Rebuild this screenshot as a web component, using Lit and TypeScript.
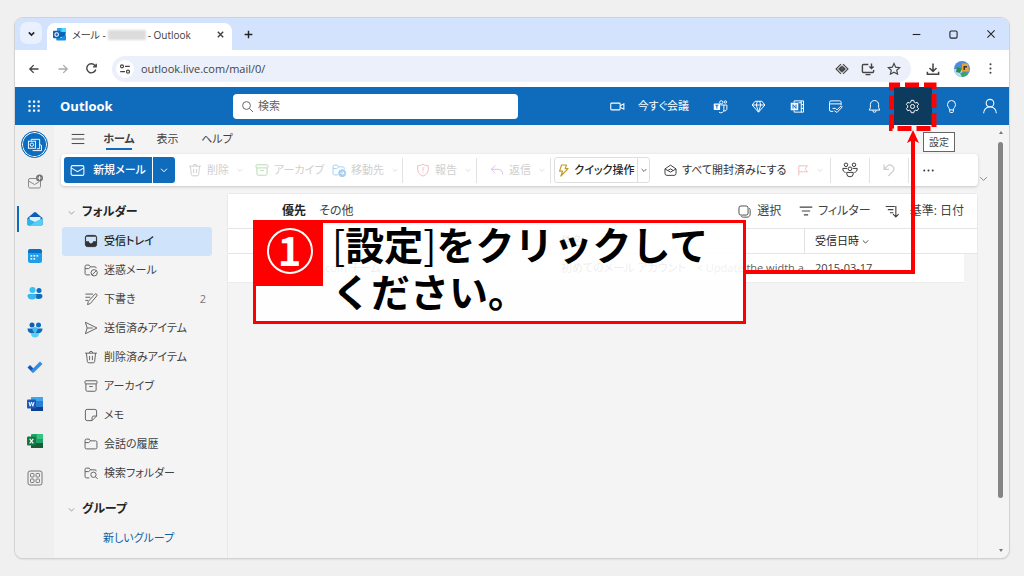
import { LitElement, html, css, svg, TemplateResult } from "lit";
import { customElement } from "lit/decorators.js";
import { classMap } from "lit/directives/class-map.js";

const glyphs: Record<string, TemplateResult> = {
  chevron: svg`<path d="M4 7.5l6 6 6-6"/>`,
  close: svg`<path d="M4 4l12 12M16 4L4 16"/>`,
  plus: svg`<path d="M10 3v14M3 10h14"/>`,
  minus: svg`<path d="M3 10h14"/>`,
  square: svg`<rect x="3.5" y="3.5" width="13" height="13" rx="2.5"/>`,
  back: svg`<path d="M17.5 10H3M9.5 3.5L3 10l6.500 6.500"/>`,
  forward: svg`<path d="M2.500 10H17M10.500 3.500L17 10l-6.500 6.500"/>`,
  reload: svg`<path d="M16.500 11.500A7 7 0 1 1 15.200 5.300L17 7.200M17.200 2.500v5h-5"/>`,
  tune: svg`<circle cx="5" cy="5.500" r="2.500"/><path d="M10 5.500h8M2 14.500h8"/><circle cx="15" cy="14.500" r="2.500"/>`,
  eye: svg`<path d="M8.500 3L1.500 10l7 7M11.500 3l7 7-7 7"/><path d="M9 6.500L5.500 10 9 13.500zM11 6.500l3.500 3.500-3.500 3.500z" fill="currentColor"/>`,
  install: svg`<path d="M10.500 3.500H3.500a1.500 1.500 0 0 0-1.500 1.500v8.500A1.500 1.500 0 0 0 3.500 15h13a1.500 1.500 0 0 0 1.500-1.500v-2M6.500 18h7M15 2v7M12 6.300l3 3 3-3"/>`,
  star: svg`<path d="M10 2.200l2.400 5.200 5.700.6-4.200 3.800 1.200 5.600L10 14.500l-5.100 2.900 1.200-5.600L1.900 8l5.700-.6z"/>`,
  download: svg`<path d="M10 2v11M5 8.500l5 5 5-5M2 14v3.500h16V14"/>`,
  dots: svg`<g fill="currentColor" stroke="none"><circle cx="10" cy="3.500" r="1.600"/><circle cx="10" cy="10" r="1.600"/><circle cx="10" cy="16.500" r="1.600"/></g>`,
  more: svg`<g fill="currentColor" stroke="none"><circle cx="3.500" cy="10" r="1.500"/><circle cx="10" cy="10" r="1.500"/><circle cx="16.500" cy="10" r="1.500"/></g>`,
  waffle: svg`<g fill="currentColor" stroke="none">${[2, 8.5, 15].map((y) => [2, 8.5, 15].map((x) => svg`<rect x=${x} y=${y} width="3.200" height="3.200" rx=".6"/>`))}</g>`,
  search: svg`<circle cx="8.500" cy="8.500" r="6"/><path d="M13 13l5.500 5.500"/>`,
  video: svg`<rect x="1" y="5.500" width="12.500" height="9" rx="1.200"/><path d="M13.500 9l5-2.500v7l-5-2.500"/>`,
  teams: svg`<circle cx="11" cy="4.500" r="2.200"/><circle cx="16.500" cy="4" r="1.600"/><path d="M10 8h4.500v6a4 4 0 0 1-6.500 3.500M14.500 8h4v5a3 3 0 0 1-4 2.800"/><rect x="1" y="6" width="8.500" height="8.500" rx="1" fill="currentColor" stroke="none"/><path d="M3.200 8.300h4M5.200 8.300v4.500" stroke="#0f6cbd"/>`,
  gem: svg`<path d="M5.500 3h9L18.500 8 10 17.500 1.500 8zM1.500 8h17M7 8l3 9.500L13 8M7 8l1.500-5M13 8l-1.500-5"/>`,
  onenote: svg`<path d="M5.500 5V2.500h12.500v15H5.500V15M15 2.500v15M15 7.500h3M15 12.500h3M11.500 5H15"/><rect x="1" y="5" width="10" height="10" fill="currentColor" stroke="none"/><path d="M4 12.800V7.500l4 5V7.300" stroke="#0f6cbd"/>`,
  note: svg`<path d="M7 16.500H4a2 2 0 0 1-2-2v-10a2 2 0 0 1 2-2h11.500a2 2 0 0 1 2 2V8M2 6.500h15.500M6 12.500h4l2 2 5.500-5.500 1.500 1.500-7 7.500-3.500-2.500"/>`,
  bell: svg`<path d="M10 2a5.500 5.500 0 0 0-5.500 5.500v4L3 14.800h14l-1.500-3.300v-4A5.500 5.500 0 0 0 10 2zM8 15v.8a2 2 0 0 0 4 0V15"/>`,
  gear: svg`<circle cx="10" cy="10" r="2.700"/><path d="M8.300 1.800h3.400l.6 2.400 1.700 1 2.400-.7 1.700 2.900-1.800 1.700v1.900l1.800 1.700-1.700 2.900-2.400-.7-1.700 1-.6 2.400H8.300l-.6-2.400-1.700-1-2.400.7-1.700-2.900L3.700 11V9.100L1.900 7.400l1.700-2.900 2.400.7 1.700-1z" stroke-linejoin="round"/>`,
  bulb: svg`<path d="M7.500 14.500c0-2.500-2.800-3.500-2.800-7.200a5.300 5.300 0 0 1 10.600 0c0 3.700-2.800 4.700-2.800 7.200zM7.500 14.500v2a1.500 1.500 0 0 0 1.500 1.500h2a1.500 1.500 0 0 0 1.500-1.500v-2"/>`,
  person: svg`<circle cx="10" cy="6.500" r="4.800"/><path d="M2 19a8 8 0 0 1 16 0"/>`,
  menu: svg`<path d="M1 3.500h18M1 10h18M1 16.500h18"/>`,
  mail: svg`<rect x="1.500" y="3.500" width="17" height="13" rx="2"/><path d="M1.500 6.500L10 11.500l8.500-5"/>`,
  trash: svg`<path d="M1.500 4.500h17M7.500 4.500a2.500 2.500 0 0 1 5 0M3.500 4.500l1.300 12a2 2 0 0 0 2 1.800h6.400a2 2 0 0 0 2-1.800l1.300-12M8 8.500v6M12 8.500v6"/>`,
  archive: svg`<rect x="1.500" y="2.500" width="17" height="4.500" rx="1"/><path d="M2.700 7v8.500a2 2 0 0 0 2 2h10.600a2 2 0 0 0 2-2V7M7.500 10.800h5"/>`,
  folder: svg`<path d="M1.500 15V5a2 2 0 0 1 2-2h3.700l2.300 2.500h7a2 2 0 0 1 2 2V15a2 2 0 0 1-2 2h-13a2 2 0 0 1-2-2zM1.500 8h5.200l2.800-2.500"/>`,
  junk: svg`<path d="M8.500 17h-5a2 2 0 0 1-2-2V5a2 2 0 0 1 2-2h3.700l2.300 2.500h6a2 2 0 0 1 2 2M1.500 8h5.200l2.800-2.500"/><circle cx="14.500" cy="14" r="4.500"/><path d="M11.500 17l6-6"/>`,
  findfolder: svg`<path d="M7.500 17h-4a2 2 0 0 1-2-2V5a2 2 0 0 1 2-2h3.700l2.300 2.500h6a2 2 0 0 1 2 2M1.500 8h5.200l2.800-2.500"/><circle cx="13.500" cy="12.500" r="3.800"/><path d="M16.300 15.300l3.200 3.200"/>`,
  moveto: svg`<path d="M8.500 17h-5a2 2 0 0 1-2-2V5a2 2 0 0 1 2-2h3.700l2.300 2.500h6a2 2 0 0 1 2 2v1.500M1.500 8h5.200l2.800-2.500"/><circle cx="14.500" cy="14.500" r="5" fill="currentColor"/><path d="M12 14.500h5M15 12.300l2.200 2.200-2.200 2.200" stroke="#fff"/>`,
  shield: svg`<path d="M10 1.500c2.500 1.800 5 2.300 7.500 2.300V9.500c0 4.500-3 7.500-7.500 9.200C5.500 17 2.500 14 2.500 9.500V3.800c2.500 0 5-.5 7.500-2.300zM10 6v5.500M10 13.500v1.200"/>`,
  reply: svg`<path d="M7.500 3.500L2 9l5.500 5.500M2 9h9.500c4 0 6.500 2.500 6.500 7.500"/>`,
  bolt: svg`<path d="M7 1.500h7.500L12.500 7H17L6 18.500 8.500 11H4z" stroke-linejoin="round"/>`,
  openmail: svg`<path d="M1.500 7.500L10 1.800l8.500 5.700v7a3 3 0 0 1-3 3h-11a3 3 0 0 1-3-3zM1.500 7.500L10 12.500l8.500-5M6 10l4-2.500 4 2.500"/>`,
  flag: svg`<path d="M3 19V3h14.500l-4 5 4 5H3"/>`,
  group: svg`<circle cx="10" cy="8.500" r="2.300"/><circle cx="5" cy="3.500" r="2.200"/><circle cx="15" cy="3.500" r="2.200"/><path d="M6 13h8v2a4 3.500 0 0 1-8 0zM1 8h5.500M13.500 8H19M1 8c0 3 1 4.500 3.500 5M19 8c0 3-1 4.500-3.500 5"/>`,
  undo: svg`<path d="M3 2v7h7M3 9l4.500-4.500a5.500 5.500 0 0 1 8 7.500l-6.500 6.500"/>`,
  select: svg`<rect x="1.500" y="1.500" width="14" height="14" rx="3"/><path d="M17.500 5c1 1 1.200 2 1.200 3.500v5.500c0 3-1.700 4.700-4.700 4.700H8.500c-1.500 0-2.500-.2-3.500-1.200"/>`,
  filter: svg`<path d="M1 4.500h18M4 10h12M7 15.500h6"/>`,
  sort: svg`<path d="M1 3.500h13M4 8h8M7 12.500h5M15.500 3v15M11.500 14.500l4 4 4-4"/>`,
  inbox: svg`<rect x="2" y="2" width="16" height="16" rx="3" fill="currentColor"/><path d="M3 4h14v6.500h-4a3 3 0 0 1-6 0H3z" fill="#cfe4fa" stroke="none"/>`,
  draft: svg`<path d="M2 3h11M2 7.500h7M2 12h4M5 18l1.200-4.500L15.500 3.200a1.800 1.800 0 0 1 2.700 2.500L9 16.500z"/>`,
  send: svg`<path d="M2 1.800L18.500 10 2 18.200 4.500 10zM4.500 10h8" stroke-linejoin="round"/>`,
  memo: svg`<path d="M11.500 18H4.500A2.500 2.500 0 0 1 2 15.500v-11A2.500 2.500 0 0 1 4.500 2h11A2.500 2.500 0 0 1 18 4.500v7zM11.500 18v-4a2.500 2.500 0 0 1 2.500-2.500h4"/>`,
};

const icon = (name: string, size = 14, weight = 1.4) => html`<svg
  width=${size} height=${size} viewBox="0 0 20 20" fill="none"
  stroke="currentColor" stroke-width=${weight} aria-hidden="true">${glyphs[name]}</svg>`;

const art = (body: TemplateResult, size = 16) =>
  html`<svg width=${size} height=${size} viewBox="0 0 16 16" aria-hidden="true">${body}</svg>`;

const outlookLogo = svg`<rect x="5" y="0" width="11" height="8" fill="#28a8ea"/><rect x="10.500" y="0" width="5.500" height="5" fill="#50d9ff"/>
  <rect x="4" y="5" width="11" height="6" fill="#0364b8"/><path d="M4 8.500l6 3.500 6-3.500v6a1 1 0 0 1-1 1H5a1 1 0 0 1-1-1z" fill="#1490df"/>
  <rect x="0" y="3.500" width="9" height="9" rx="1" fill="#0f5fb4"/><circle cx="4.500" cy="8" r="2.200" fill="none" stroke="#fff" stroke-width="1.300"/>`;

const railArt: { label: string; body: TemplateResult; active?: boolean }[] = [
  { label: "新しいメール", body: svg`<g fill="none" stroke="#8a8a8a"><rect x="1.500" y="4.500" width="12" height="9.500" rx="1.500"/><path d="M1.500 7l6 3.500L12 8"/></g><circle cx="12.500" cy="4" r="3.500" fill="#757575"/><path d="M10.500 4h4M12.500 2v4" stroke="#fff" stroke-width=".8"/>` },
  { label: "メール", active: true, body: svg`<path d="M.5 7L7 1.500a1.600 1.600 0 0 1 2 0L15.500 7v7H.5z" fill="#0f5fb8"/><path d="M2.500 6h11v6h-11z" fill="#dff3fc"/><path d="M.5 7.500L8 11l7.500-3.500v5.500a2 2 0 0 1-2 2h-11a2 2 0 0 1-2-2z" fill="#2bb5ee"/><path d="M8 11l7.500-3.500v5.500a2 2 0 0 1-2 2h-11z" fill="#54d0f8"/>` },
  { label: "予定表", body: svg`<rect x="1" y="1" width="14" height="14" rx="2.500" fill="#1e9de8"/><path d="M1 5V3.500A2.500 2.500 0 0 1 3.500 1h9A2.500 2.500 0 0 1 15 3.500V5z" fill="#0870c8"/><g fill="#e6f7ff"><rect x="6.500" y="7" width="1.700" height="1.700"/><rect x="9.500" y="7" width="1.700" height="1.700"/><rect x="3.500" y="10" width="1.700" height="1.700"/><rect x="6.500" y="10" width="1.700" height="1.700"/><rect x="3.500" y="7" width="1.700" height="1.700"/></g>` },
  { label: "連絡先", body: svg`<circle cx="5.500" cy="5" r="3" fill="#38c0f5"/><circle cx="12" cy="5.500" r="2.500" fill="#0a6fc4"/><path d="M8 9h5.500A2 2 0 0 1 15.500 11c0 2-1.500 3-4 3-2 0-3.500-1-3.500-3z" fill="#0f6cbd"/><path d="M1.500 9H8a1.500 1.500 0 0 1 1.500 1.500c0 2.500-1.500 4-4.500 4S.5 13 .5 10.500z" fill="#38b8f2"/>` },
  { label: "グループ", body: svg`<circle cx="5" cy="3" r="2.500" fill="#0a5fb4"/><circle cx="11.500" cy="3" r="2.500" fill="#0a6fc4"/><path d="M.5 6.500h7v5C3 12 .5 10 .5 6.500zM8.500 6.500h7c0 3.500-2.500 5.500-7 5z" fill="#0f6cbd"/><circle cx="8" cy="7.500" r="2.500" fill="#38c0f5"/><path d="M4 11h8c0 3-1.500 4.500-4 4.500S4 14 4 11z" fill="#50d0fa"/>` },
  { label: "To Do", body: svg`<path d="M.5 8.500L3 6l5 5-2.500 2.500z" fill="#1a56b8"/><path d="M5.500 13.500L3.800 11.800 13 2.500 15.500 5 6.800 13.500a1 1 0 0 1-1.300 0z" fill="#2f8ee8"/>` },
  { label: "Word", body: svg`<rect x="4" y="1" width="12" height="14" rx="1" fill="#2b7cd3"/><rect x="4" y="1" width="12" height="4" fill="#41a5ee"/><rect x="4" y="11" width="12" height="4" fill="#103f91"/><rect x="0" y="3.500" width="9" height="9" rx="1" fill="#185abd"/><path d="M2 6l1.200 4.200L4.500 6l1.300 4.200L7 6" fill="none" stroke="#fff"/>` },
  { label: "Excel", body: svg`<rect x="4" y="1" width="12" height="14" rx="1" fill="#21a366"/><rect x="10" y="1" width="6" height="5" fill="#33c481"/><rect x="4" y="10" width="12" height="5" fill="#185c37"/><rect x="0" y="3.500" width="9" height="9" rx="1" fill="#107c41"/><path d="M2.700 5.800l3.600 4.600M6.300 5.800l-3.600 4.600" stroke="#fff" stroke-width="1.100"/>` },
  { label: "その他のアプリ", body: svg`<g fill="none" stroke="#777"><rect x="1" y="1" width="14" height="14" rx="2"/><rect x="3.500" y="3.500" width="3.500" height="3.500" rx=".8"/><rect x="9" y="3.500" width="3.500" height="3.500" rx=".8"/><rect x="3.500" y="9" width="3.500" height="3.500" rx=".8"/><rect x="9" y="9" width="3.500" height="3.500" rx=".8"/></g>` },
];

const folders = [
  { icon: "inbox", name: "受信トレイ", selected: true },
  { icon: "junk", name: "迷惑メール" },
  { icon: "draft", name: "下書き", count: 2 },
  { icon: "send", name: "送信済みアイテム" },
  { icon: "trash", name: "削除済みアイテム" },
  { icon: "archive", name: "アーカイブ" },
  { icon: "memo", name: "メモ" },
  { icon: "folder", name: "会話の履歴" },
  { icon: "findfolder", name: "検索フォルダー" },
];

const headerTools: [string, string][] = [
  ["teams", "Teams"], ["gem", "Premium"], ["onenote", "OneNote"], ["note", "予定"],
  ["bell", "通知"], ["gear", "設定"], ["bulb", "ヒント"], ["person", "アカウント"],
];

@customElement("app-root")
export class AppRoot extends LitElement {
  static styles = css`
    :host {
      display: flex;
      box-sizing: border-box;
      min-height: 100vh;
      padding: 18px 15px;
      background: #f0f0f0;
      color: #242424;
      font: 11px/16px "Open Sans", "Noto Sans CJK JP", sans-serif;
      font-feature-settings: "palt";
    }
    * { box-sizing: border-box; }
    svg { display: block; flex: none; }
    button, input {
      font: inherit; color: inherit; background: none; border: 0; padding: 0; margin: 0;
      font-feature-settings: inherit;
    }
    button { display: flex; align-items: center; justify-content: center; white-space: nowrap; }
    a { color: inherit; text-decoration: none; }
    .window {
      position: relative; flex: 1; min-width: 0;
      display: flex; flex-direction: column;
      border-radius: 8px; background: #f4f4f4;
      box-shadow: 0 0 0 1px #d3d3d3, 0 1px 2px #bbb;
    }

    .tabstrip {
      display: flex; align-items: flex-end; height: 32px; padding-left: 5px;
      background: #d3e2fd; border-radius: 8px 8px 0 0;
    }
    .tab-list { width: 22px; height: 22px; margin: 0 5px 6px 0; border-radius: 7px; background: #e9f0fe; }
    .tab {
      display: flex; align-items: center; width: 185px; height: 27px; padding: 0 7px 4px 6px;
      background: #fff; border-radius: 8px 8px 0 0; font-size: 10px; color: #3c3c3c;
    }
    .tab-title { margin-left: 6px; white-space: nowrap; }
    .masked { width: 38px; height: 10px; margin: 0 2px; background: #dcdcdc; filter: blur(1px); }
    .tab .close { margin-left: auto; }
    .new-tab { width: 33px; height: 32px; }
    .win-controls { display: flex; margin-left: auto; height: 32px; }
    .win-controls button { width: 37px; }

    .toolbar {
      display: flex; align-items: center; height: 37px; padding: 0 4px; background: #fff; color: #444;
    }
    .toolbar button { width: 29px; height: 26px; }
    .toolbar .faded { color: #aaa; }
    .address {
      flex: 1; display: flex; align-items: center; height: 26px; margin: 0 7px 0 6px; padding: 0 4px;
      border-radius: 13px; background: #ebf0fa;
    }
    .toolbar .site { width: 18px; height: 18px; border-radius: 9px; background: #fff; }
    .address input { flex: 1; min-width: 0; padding-left: 7px; }
    .toolbar .end { width: 26px; }

    .header {
      display: flex; align-items: center; height: 38px; padding-left: 12px;
      background: #0f6cbd; color: #fff;
    }
    .brand { margin-left: 19px; width: 173px; font-size: 13px; font-weight: 700; }
    .search { display: flex; align-items: center; width: 285px; height: 25px; padding: 0 8px; border-radius: 4px; background: #fff; color: #666; }
    .search input { flex: 1; min-width: 0; margin-left: 4px; }
    .search input::placeholder { color: #616161; opacity: 1; }
    .meet { gap: 13px; margin-left: auto; }
    .tools { display: grid; grid-template-columns: repeat(8, 1fr); width: 308px; margin-left: 12px; height: 38px; }
    .tools .current { background: #0c3b5e; }

    .body { flex: 1; display: flex; min-height: 0; }
    .rail {
      display: flex; flex-direction: column; align-items: stretch; width: 39px; padding-top: 6px;
      background: #efefef; border-radius: 0 0 0 8px;
    }
    .rail button { height: 37px; }
    .rail .account {
      width: 27px; height: 27px; margin: 0 auto 5px; border: 1px solid #0f6cbd; border-radius: 50%;
      background: #0f6cbd; box-shadow: inset 0 0 0 1px #fff; color: #fff;
    }
    .rail .active { position: relative; }
    .rail .active::before {
      content: ""; position: absolute; left: 2px; top: 6px; width: 2px; height: 26px; background: #0f6cbd;
    }
    .page { flex: 1; min-width: 0; display: flex; }
    .main { flex: 1; min-width: 0; display: flex; flex-direction: column; padding-left: 7px; }
    .menu { display: flex; align-items: flex-start; height: 29px; padding: 5px 0 0 10px; color: #424242; }
    .menu button { height: 20px; border-bottom: 2px solid transparent; }
    .menu .burger { width: 14px; margin-right: 21px; }
    .menu .tab-home { width: 26px; margin-right: 23px; border-color: #0f6cbd; font-weight: 600; }
    .menu .tab-view { width: 25px; margin-right: 23px; }
    .menu .tab-help { width: 28px; }

    .ribbon {
      display: grid; align-items: center; height: 32px; padding-left: 3px;
      grid-template-columns: 111px 67px 77px 84px 74px 74px 100px 133px 47px 39px 39px 38px;
      background: #fff; border-radius: 4px; box-shadow: 0 1px 3px #c6c6c6;
    }
    .cmd { justify-content: flex-start; height: 25px; padding-left: 13px; gap: 5px; color: #333; }
    .caret { margin-left: 2px; }
    .disabled { color: #cfcfcf; }
    .rule { border-right: 1px solid #e2e2e2; }
    .center { justify-content: center; padding: 0; }
    .tint-green { color: #b9dcb4; }
    .tint-blue { color: #a5cff0; }
    .tint-red { color: #efbcc0; }
    .tint-purple { color: #dcbfe6; }
    .tint-gold { color: #c19c2c; }
    .split { display: flex; height: 26px; }
    .primary { border-radius: 3px; background: #0f6cbd; color: #fff; font-weight: 500; }
    .primary .act { width: 89px; gap: 8px; border-right: 1px solid #fff; }
    .primary .drop { flex: 1; }
    .quick { margin: 0 1px 0 3px; border: 1px solid #dedede; border-radius: 3px; font-weight: 500; }
    .quick .act { width: 83px; gap: 4px; border-right: 1px solid #dedede; }
    .quick .drop { flex: 1; }
    .expand { width: 15px; padding-top: 48px; color: #777; }

    .content { flex: 1; display: flex; padding-top: 7px; }
    .folders { width: 166px; padding-top: 8px; }
    .section { display: flex; align-items: center; gap: 6px; height: 22px; padding-left: 6px; font-size: 12px; font-weight: 600; color: #242424; }
    .section svg { color: #888; }
    .folder-list {
      display: grid; grid-auto-rows: 1fr; min-height: 260px; margin: 4px 15px 11px 0; padding: 0; list-style: none;
    }
    .folder { display: flex; align-items: center; gap: 6px; height: 100%; padding: 0 6px 0 22px; border-radius: 3px; color: #424242; margin-left: 1px; }
    .folder svg { color: #616161; }
    .folder.selected { background: #cfe4fa; font-weight: 500; color: #242424; }
    .folder.selected svg { color: #333; }
    .count { margin-left: auto; color: #777; }
    .new-group { display: block; margin-top: 10px; padding-left: 42px; color: #115ea3; }

    .list { flex: 1; min-width: 0; border: 1px solid #e9e9e9; border-bottom: 0; border-radius: 4px 4px 0 0; }
    .list-head { display: flex; align-items: center; height: 34px; padding: 0 13px 0 54px; background: #fff; color: #424242; font-size: 12px; }
    .list-head .on { font-weight: 600; color: #242424; margin-right: 13px; }
    .list-head .sel { gap: 6px; margin-left: auto; }
    .list-head .fil { gap: 5px; margin: 0 14px 0 18px; }
    .list-head .srt { gap: 11px; }
    table { width: 100%; table-layout: fixed; border-collapse: collapse; text-align: left; color: #424242; }
    th, td { padding: 0 11px; font-weight: 400; white-space: nowrap; overflow: hidden; background: #fff; }
    th { height: 25px; border-top: 1px solid #e6e6e6; border-bottom: 1px solid #e6e6e6; color: #242424; }
    td { height: 29px; border-bottom: 1px solid #ececec; }
    .c-from { width: 322px; padding-left: 94px; }
    .c-date { width: 160px; }
    .c-end { width: 13px; padding: 0; }
    td.c-end { background: none; border: 0; }
    .date-sort { gap: 2px; }
    th.c-date { box-shadow: inset 1px 0 #e2e2e2; }
    .preview { margin-left: 8px; color: #616161; }

    .scroll { display: flex; flex-direction: column; align-items: center; width: 16px; padding: 4px 1px 4px 0; color: #777; }
    .thumb { width: 5px; height: 356px; margin: 8px 0 auto; border-radius: 3px; background: #858585; }
    .arrow { border: 2px solid transparent; width: 0; height: 0; }
    .arrow.up { border-bottom: 3px solid #777; }
    .arrow.down { border-top: 3px solid #777; }

    .tooltip {
      position: absolute; top: 114px; right: 54px; width: 32px; height: 20px;
      display: flex; align-items: center; justify-content: center; font-size: 10px;
      background: #fff; border: 1px solid #666; color: #444;
    }
    .leader { position: absolute; left: 730px; right: 94px; top: 122px; height: 134px; border: solid #f00; border-width: 0 4px 4px 0; }
    .leader-head { position: absolute; right: 90px; top: 112px; }
    .ring { position: absolute; right: 71px; top: 63px; }
    .callout {
      position: absolute; left: 238px; top: 202px; width: 493px; height: 104px;
      display: flex; align-items: flex-start; border: 3px solid #f00; background: rgba(255, 255, 255, 0.9);
    }
    .badge {
      display: flex; align-items: flex-start; justify-content: center; width: 67px; height: 63px; padding-top: 5px; background: #f00;
    }
    .num {
      display: flex; align-items: center; justify-content: center; width: 46px; height: 46px; padding-bottom: 4px;
      border: 2px solid #fff; border-radius: 50%; color: #fff;
      font: 700 40px/40px "Noto Sans CJK JP", sans-serif;
    }
    .message {
      margin: -3px 0 0; padding-left: 9px; color: #000; white-space: nowrap;
      font: 700 39px/47px "Noto Sans CJK JP", sans-serif; font-feature-settings: normal;
    }
    .thin { font-weight: 400; }
  `;

  private tabStrip() {
    return html`<div class="tabstrip">
      <button class="tab-list" aria-label="タブを検索">${icon("chevron", 9, 3.5)}</button>
      <div class="tab">
        ${art(outlookLogo, 13)}
        <span class="tab-title">メール -</span><span class="masked"></span><span>- Outlook</span>
        <button class="close" aria-label="閉じる">${icon("close", 9, 3)}</button>
      </div>
      <button class="new-tab" aria-label="新しいタブ">${icon("plus", 11, 2.6)}</button>
      <div class="win-controls">
        <button aria-label="最小化">${icon("minus", 11, 2)}</button>
        <button aria-label="最大化">${icon("square", 11, 2)}</button>
        <button aria-label="ウィンドウを閉じる">${icon("close", 12, 1.8)}</button>
      </div>
    </div>`;
  }

  private toolbar() {
    return html`<div class="toolbar">
      <button aria-label="戻る">${icon("back", 12, 2.2)}</button>
      <button class="faded" aria-label="進む">${icon("forward", 12, 2.2)}</button>
      <button aria-label="再読み込み">${icon("reload", 13, 2.2)}</button>
      <div class="address">
        <button class="site" aria-label="サイト情報">${icon("tune", 12, 2)}</button>
        <input aria-label="アドレス" value="outlook.live.com/mail/0/" />
        <button class="end" aria-label="表示">${icon("eye", 14, 1.6)}</button>
        <button class="end" aria-label="インストール">${icon("install", 14, 2)}</button>
        <button class="end" aria-label="ブックマーク">${icon("star", 14, 1.7)}</button>
      </div>
      <button aria-label="ダウンロード">${icon("download", 14, 2.2)}</button>
      <button aria-label="プロフィール">${art(svg`<circle cx="8" cy="8" r="8" fill="#4c8fd8"/><path d="M0 8h8v8A8 8 0 0 1 0 8z" fill="#b8dcf4"/><path d="M3 6l5 2-2 4-4-1z" fill="#2c8a4a"/><path d="M8 2.500h6l1 8H8z" fill="#e8a33d"/><path d="M9.500 5h3.500v1.500h-2V9h-1.500z" fill="#333"/><path d="M6 12l6-1 1 3-5 2z" fill="#3fa45a"/>`)}</button>
      <button aria-label="メニュー">${icon("dots", 13)}</button>
    </div>`;
  }

  private header() {
    return html`<div class="header">
      <button aria-label="アプリ起動ツール">${icon("waffle", 14)}</button>
      <span class="brand">Outlook</span>
      <label class="search">${icon("search", 13, 1.5)}<input type="search" aria-label="検索" placeholder="検索" /></label>
      <button class="meet">${icon("video", 15, 1.4)}今すぐ会議</button>
      <div class="tools">
        ${headerTools.map(([name, label]) => html`<button
          class=${classMap({ current: name === "gear" })} aria-label=${label}>${icon(name, name === "person" ? 16 : 15, 1.3)}</button>`)}
      </div>
    </div>`;
  }

  private rail() {
    return html`<nav class="rail">
      <button class="account" aria-label="アカウント">${art(svg`<g fill="none" stroke="#fff"><path d="M4.500 4V2.500h9v10h-3M13.500 8l2 1v5.500H6"/><rect x="1.500" y="4.500" width="7.500" height="7.500" fill="#0f6cbd"/><circle cx="5.200" cy="8.200" r="1.800"/></g>`, 15)}</button>
      ${railArt.map((r) => html`<button class=${classMap({ active: !!r.active })} aria-label=${r.label}>${art(r.body)}</button>`)}
    </nav>`;
  }

  private ribbon() {
    const caret = html`<span class="caret">${icon("chevron", 8, 1.8)}</span>`;
    return html`<div class="ribbon">
      <div class="split primary">
        <button class="act">${icon("mail", 15)}新規メール</button>
        <button class="drop" aria-label="その他の作成">${icon("chevron", 10, 2)}</button>
      </div>
      <button class="cmd disabled">${icon("trash")}削除${caret}</button>
      <button class="cmd disabled"><span class="tint-green">${icon("archive")}</span>アーカイブ</button>
      <button class="cmd disabled rule"><span class="tint-blue">${icon("moveto")}</span>移動先${caret}</button>
      <button class="cmd disabled rule"><span class="tint-red">${icon("shield")}</span>報告${caret}</button>
      <button class="cmd disabled rule"><span class="tint-purple">${icon("reply")}</span>返信${caret}</button>
      <div class="split quick">
        <button class="act"><span class="tint-gold">${icon("bolt", 13, 1.8)}</span>クイック操作</button>
        <button class="drop" aria-label="クイック操作の一覧">${icon("chevron", 8, 1.8)}</button>
      </div>
      <button class="cmd">${icon("openmail", 13)}すべて開封済みにする</button>
      <button class="cmd disabled rule"><span class="tint-red">${icon("flag", 12, 1.6)}</span>${caret}</button>
      <button class="cmd center rule" aria-label="グループ">${icon("group", 16, 1.2)}</button>
      <button class="cmd center disabled rule" aria-label="元に戻す">${icon("undo", 14, 1.8)}</button>
      <button class="cmd center" aria-label="その他">${icon("more", 13)}</button>
    </div>`;
  }

  private folderPane() {
    return html`<nav class="folders">
      <div class="section">${icon("chevron", 9, 1.8)}フォルダー</div>
      <ul class="folder-list">
        ${folders.map((f) => html`<li><a href="#" class="folder ${classMap({ selected: !!f.selected })}">
          ${icon(f.icon)}<span>${f.name}</span>${f.count ? html`<span class="count">${f.count}</span>` : ""}</a></li>`)}
      </ul>
      <div class="section">${icon("chevron", 9, 1.8)}グループ</div>
      <a href="#" class="new-group">新しいグループ</a>
    </nav>`;
  }

  private messages() {
    return html`<section class="list">
      <div class="list-head">
        <button class="on">優先</button><button>その他</button>
        <button class="sel">${icon("select", 13)}選択</button>
        <button class="fil">${icon("filter", 14, 1.6)}フィルター</button>
        <button class="srt">${icon("sort", 14, 1.6)}基準: 日付</button>
      </div>
      <table>
        <thead><tr>
          <th class="c-from"></th><th>件名</th>
          <th class="c-date"><button class="date-sort">受信日時${icon("chevron", 9, 1.8)}</button></th><th class="c-end"></th>
        </tr></thead>
        <tbody><tr>
          <td class="c-from">.com チーム</td>
          <td>初めてのメール アカウント <span class="preview">&lt; Update the width a</span></td>
          <td class="c-date">2015-03-17</td><td class="c-end"></td>
        </tr></tbody>
      </table>
    </section>`;
  }

  render() {
    return html`<div class="window">
      ${this.tabStrip()} ${this.toolbar()} ${this.header()}
      <div class="body">
        ${this.rail()}
        <div class="page">
          <div class="main">
            <div class="menu">
              <button class="burger" aria-label="ナビゲーション">${icon("menu", 14, 1.4)}</button>
              <button class="tab-home">ホーム</button>
              <button class="tab-view">表示</button>
              <button class="tab-help">ヘルプ</button>
            </div>
            ${this.ribbon()}
            <div class="content">${this.folderPane()} ${this.messages()}</div>
          </div>
          <div class="expand"><button aria-label="リボンを展開">${icon("chevron", 11, 1.6)}</button></div>
          <div class="scroll"><span class="arrow up"></span><span class="thumb"></span><span class="arrow down"></span></div>
        </div>
      </div>
      <div class="tooltip" role="tooltip">設定</div>
      <div class="leader"></div>
      <svg class="leader-head" width="12" height="14" viewBox="0 0 12 14"><path d="M6 0l6 13-6-3-6 3z" fill="#f00"/></svg>
      <svg class="ring" width="50" height="52" viewBox="0 0 50 52"><path d="M3.500 47.500V4H46v43.500z" fill="none" stroke="#f00" stroke-width="5" stroke-dasharray="14 5"/></svg>
      <div class="callout">
        <div class="badge"><span class="num">1</span></div>
        <p class="message"><span class="thin">[</span>設定<span class="thin">]</span>をクリックして<br />ください。</p>
      </div>
    </div>`;
  }
}
